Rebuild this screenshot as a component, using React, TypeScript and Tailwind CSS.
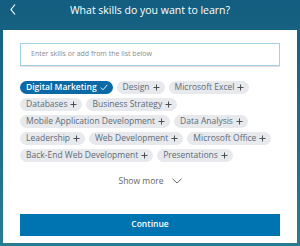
import React from 'react'

const skills: { name: string; selected?: boolean }[] = [
  { name: 'Digital Marketing', selected: true },
  { name: 'Design' },
  { name: 'Microsoft Excel' },
  { name: 'Databases' },
  { name: 'Business Strategy' },
  { name: 'Mobile Application Development' },
  { name: 'Data Analysis' },
  { name: 'Leadership' },
  { name: 'Web Development' },
  { name: 'Microsoft Office' },
  { name: 'Back-End Web Development' },
  { name: 'Presentations' },
]

const Plus = () => (
  <svg width="7" height="7" viewBox="0 0 7 7" className="ml-[3px] shrink-0">
    <path d="M3.5 0.5v6M0.5 3.5h6" stroke="#4b4f56" strokeWidth="1" />
  </svg>
)

const Check = () => (
  <svg width="8" height="7" viewBox="0 0 8 7" className="ml-[3px] shrink-0">
    <path d="M0.8 3.6l2.2 2.2L7.3 0.8" stroke="#ffffff" strokeWidth="0.9" fill="none" />
  </svg>
)

const App = () => {
  return (
    <div
      className="w-[300px] h-[246px] flex flex-col bg-gradient-to-b from-[#135e80] to-[#2a7b91] overflow-hidden"
      style={{ fontFamily: '"Open Sans", "Noto Sans", sans-serif' }}
    >
      <div className="relative h-[30px] flex items-start justify-center pt-[3px]">
        <svg width="6" height="11" viewBox="0 0 6 11" className="absolute left-[10px] top-[4px]">
          <path d="M5 0.5L1 5.5l4 5" stroke="#ffffff" strokeWidth="1.2" fill="none" />
        </svg>
        <h1 className="text-white text-[10.5px] leading-[14px]">What skills do you want to learn?</h1>
      </div>

      <div className="mx-[3px] mb-[3px] flex-1 bg-white flex flex-col px-[17px] pt-[13px]">
        <div className="h-[23px] border border-[#9fd0e6] flex items-center pl-[10px] shadow-[0_1px_0_#e6dde6]">
          <span className="text-[7px] text-[#8b8b8b]">Enter skills or add from the list below</span>
        </div>

        <div className="mt-[15px] flex flex-wrap gap-x-[4px] gap-y-[4px]">
          {skills.map((s) =>
            s.selected ? (
              <div
                key={s.name}
                className="h-[13px] rounded-full bg-[#0a6aa6] flex items-center pl-[6px] pr-[5px] text-white text-[8.5px] font-semibold"
              >
                {s.name}
                <Check />
              </div>
            ) : (
              <div
                key={s.name}
                className="h-[13px] rounded-full bg-[#e7e9ec] flex items-center pl-[6px] pr-[5px] text-[#5d6b79] text-[8.5px]"
              >
                {s.name}
                <Plus />
              </div>
            )
          )}
        </div>

        <div className="mt-[13px] flex items-center justify-center text-[8.5px] text-[#666666]">
          <span>Show more</span>
          <svg width="10" height="6" viewBox="0 0 10 6" className="ml-[8px]">
            <path d="M0.5 0.8L5 5l4.5-4.2" stroke="#555" strokeWidth="0.9" fill="none" />
          </svg>
        </div>

        <button className="mt-[26px] h-[22px] bg-[#0073b1] text-white text-[8.5px] font-semibold flex items-center justify-center">
          Continue
        </button>
      </div>
    </div>
  )
}

export default App
